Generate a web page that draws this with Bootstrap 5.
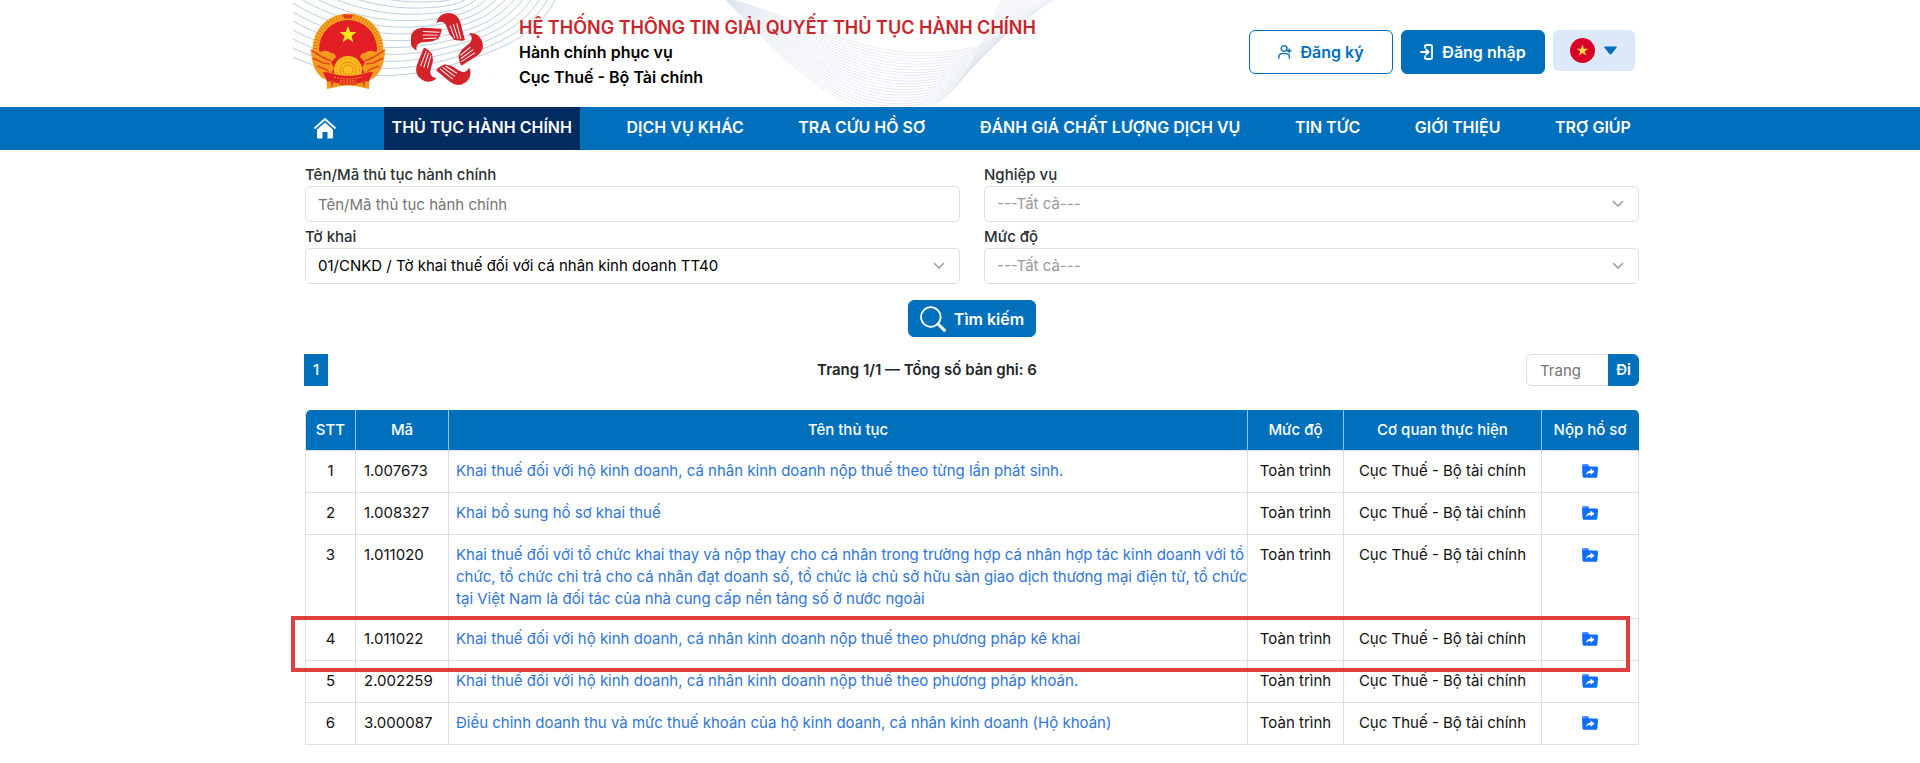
<!DOCTYPE html>
<html lang="vi">
<head>
<meta charset="utf-8">
<meta name="viewport" content="width=device-width, initial-scale=1">
<title>Hệ thống thông tin giải quyết thủ tục hành chính</title>
<link rel="stylesheet" href="https://cdn.jsdelivr.net/npm/bootstrap@5.3.0/dist/css/bootstrap.min.css">
<style>
  :root { --brand: #0070bc; --brand-dark: #002c60; --link: #2f76d8; --line: #dcdfe4; }
  body { font-family: Inter, "Open Sans", sans-serif; font-size: 15px; line-height: 22px; color: #212529; background: #fff; }
  .page-wrap { max-width: 1382px; padding: 0 12px 0 36px; }
  .site-header { min-height: 107px; padding: 10px 4px; }
  .header-art { left: 24px; top: 0; height: 106px; width: 830px; pointer-events: none; }
  .site-names { padding: 6px 0 0 10px; }
  .site-title { font-size: 18px; line-height: 24px; font-weight: 600; color: #c9252b; }
  .site-sub { font-size: 16px; line-height: 25px; font-weight: 600; color: #000; }
  .btn-brand, .btn-brand-outline { --bs-btn-color: #fff; --bs-btn-bg: var(--brand); --bs-btn-border-color: var(--brand); --bs-btn-hover-color: #fff; --bs-btn-hover-bg: #005f9f; --bs-btn-font-weight: 600; --bs-btn-font-size: 16px; --bs-btn-border-radius: 6px; }
  .btn-brand-outline { --bs-btn-color: var(--brand); --bs-btn-bg: #fff; }
  .btn-account { width: 144px; height: 44px; padding: 0; }
  .btn-lang { width: 82px; height: 41px; background: #dbe9f8; border-radius: 6px; padding: 0; }
  .btn-lang:hover { background: #cbdff4; }
  .main-nav { background: var(--brand); }
  .main-nav .nav-link { color: #fff; font-size: 16px; line-height: 24px; font-weight: 600; padding: 8px 8px 11px; text-transform: uppercase; }
  .main-nav .nav-link.active { background: var(--brand-dark); }
  .search-form { padding-top: 14px; }
  .field-label { font-weight: 500; line-height: 22px; display: block; color: #2b2f33; }
  .form-control, .form-select { height: 36px; font-size: 15px; line-height: 22px; padding: 6px 12px; border-color: var(--line); border-radius: 5px; color: #000; }
  .form-control::placeholder { color: #757575; }
  .form-select { background-size: 16px; background-image: url("data:image/svg+xml,%3csvg xmlns='http://www.w3.org/2000/svg' viewBox='0 0 16 16'%3e%3cpath fill='none' stroke='%23a0a0a0' stroke-width='1.6' d='m3 5 5 5 5-5'/%3e%3c/svg%3e"); }
  .form-select.unset { color: #9a9a9a; }
  .btn-search { height: 37px; padding: 0 11px; }
  .pager { padding-top: 17px; margin-bottom: 24px; }
  .page-chip { background: var(--brand); color: #fff; width: 24px; height: 32px; line-height: 32px; text-align: center; text-decoration: none; margin-left: -1px; }
  .page-jump { width: 113px; }
  .page-jump .form-control, .page-jump .btn { height: 32px; padding: 0 8px; font-size: 15px; }
  .page-jump .form-control { padding: 0 13px; }
  .page-jump .btn { padding: 0 7px; }
  .proc-table { table-layout: fixed; border-collapse: separate; border-spacing: 0; border-left: 1px solid var(--line); color: #111; margin: 0; }
  .proc-table th, .proc-table td { border: 0 solid var(--line); border-width: 0 1px 1px 0; padding: 9px 8px 8px; height: 42px; }
  .proc-table th { background: var(--brand); color: #fff; font-weight: 500; text-align: center; height: 41px; padding: 9px 4px; border-color: #cfe3f2 #9cc6e4; border-bottom-color: var(--line); }
  .proc-table th:first-child { border-top-left-radius: 5px; }
  .proc-table th:last-child { border-top-right-radius: 5px; border-right-color: var(--brand); }
  .proc-table .proc-name { padding-right: 0; padding-left: 7px; }
  .proc-table a { color: var(--link); text-decoration: none; }
  .proc-table .folder-link { display: block; line-height: 0; padding-top: 4px; color: #0d6efd; }
  .marked { position: relative; }
  .marker { position: absolute; left: -15px; right: 9px; top: -3px; bottom: -11px; border: 4px solid #e23d3d; pointer-events: none; z-index: 2; }
  .c-stt { width: 50px; } .c-ma { width: 93px; } .c-md { width: 96px; } .c-cq { width: 198px; } .c-nop { width: 97px; }
  @media (min-width: 1400px) { .long-line { display: block; white-space: nowrap; } }
</style>
</head>
<body>

<svg class="d-none" aria-hidden="true">
  <symbol id="folder" viewBox="0 0 16 14">
    <path fill="currentColor" opacity=".75" d="M0 3V1.600C0 .7.700 0 1.600 0h3.600c.5 0 .9.200 1.200.6L7.600 2z"/>
    <path fill="currentColor" d="M0 2.500 5.500 1.500 7 2.600h7.400c.9 0 1.600.7 1.600 1.600l-.6 8c-.1.900-.7 1.500-1.500 1.500H2c-.8 0-1.400-.6-1.500-1.500z"/>
    <path fill="#fff" d="m8.600 4.600 4 3.200-4 2.900V9c-2 0-3.300.5-4.600 1.900.3-2.700 1.900-4.300 4.600-4.500z"/>
  </symbol>
</svg>

<header>
  <div class="container-fluid page-wrap position-relative">
    <svg class="header-art position-absolute" viewBox="293 0 830 106" aria-hidden="true" fill="none">
      <g id="wavesLeft" stroke="#b4c8dd" stroke-width=".9"></g>
      <g id="wavesMid" stroke="#dfe7ef" stroke-width=".8"></g>
    </svg>
    <div class="site-header d-flex justify-content-between position-relative">
      <div class="d-flex">
        <svg width="78" height="82" viewBox="309 10 78 82" role="img" aria-label="Quốc huy Việt Nam">
          <circle cx="348" cy="49" r="35.500" fill="#f6a51c"/>
          <circle cx="348" cy="49" r="32.500" fill="none" stroke="#ea6a1c" stroke-width="5" stroke-dasharray=".8 2.200"/>
          <circle cx="348" cy="49" r="29" fill="#e31e25"/>
          <path d="M342.500 14.500h11l-2 4h-7z" fill="#e8381f"/>
          <path d="m348 26 2.200 6h6.300l-5 3.900 1.900 6.500-5.400-4-5.400 4 1.900-6.500-5-3.900h6.300z" fill="#fde31d"/>
          <path d="M311 52q5-3 10 0 5-3 10 1 4 0 5 4l-5 5 3 6-4 8 4 6-12-4q-10-8-11-26zM385 52q-5-3-10 0-5-3-10 1-4 0-5 4l5 5-3 6 4 8-4 6 12-4q10-8 11-26z" fill="#f59a1c"/>
          <path d="m311 50 11 7 9 4M313 58l10 5 7 1M317 66l8 3 5 4M385 50l-11 7-9 4M383 58l-10 5-7 1M379 66l-8 3-5 4" fill="none" stroke="#e8461d" stroke-width="1.600"/>
          <circle cx="348" cy="70" r="14" fill="#f9bd1b"/>
          <g fill="none" stroke="#f08a1c"><circle cx="348" cy="70" r="11.500" stroke-dasharray="2 1.500"/><circle cx="348" cy="70" r="8"/><circle cx="348" cy="70" r="5"/></g>
          <path d="M326 71q22 9 44 0l-1 18-9-2q-12-3-24 0l-9 2z" fill="#f39a1c"/>
          <path d="M323 72q6 0 10 2 15 4 30 0 4-2 10-2l-4 9q-21 6-42 0z" fill="#e31e25"/>
          <path d="m330 80 4 1-2 7zM366 80l-4 1 2 7zM339 82h18v3h-18z" fill="#e5481d"/>
          <path d="M334 77q14 4 28 0M340 81h16" fill="none" stroke="#f5a01c" stroke-dasharray="2 1"/>
        </svg>
        <svg class="ms-4" width="74" height="82" viewBox="-36 -42 77 85" role="img" aria-label="Biểu trưng hành chính phục vụ">
          <defs>
            <g id="hand">
              <path fill="#d2232a" d="M-9.300-28.500C-8.500-35-3.500-39 3-39c7 0 10.500 4 12.500 10l4.300 17c.3 1.400-.8 2-1.800 1.200-.4 1-1.700 1.100-2.400.1-.6.900-1.900.8-2.400-.2-.6.800-2 .6-2.300-.4-.9.700-2.100.4-2.500-.8L5-15.500C3.500-18 2.500-21 1-25c-1.500-4.500-6-6.500-10.300-3.500z"/>
              <path d="M4.500-26 9.500-13M8-27.500 12.800-12.500M11.500-28.500 16-12" stroke="#fff" stroke-width="1" fill="none"/>
            </g>
          </defs>
          <use href="#hand"/><use href="#hand" transform="rotate(72)"/><use href="#hand" transform="rotate(144)"/><use href="#hand" transform="rotate(216)"/><use href="#hand" transform="rotate(288)"/>
        </svg>
        <div class="site-names ms-4">
          <div class="site-title">HỆ THỐNG THÔNG TIN GIẢI QUYẾT THỦ TỤC HÀNH CHÍNH</div>
          <div class="site-sub">Hành chính phục vụ</div>
          <div class="site-sub">Cục Thuế - Bộ Tài chính</div>
        </div>
      </div>
      <div class="d-flex gap-2 pt-3 mt-1 align-items-start">
        <button type="button" class="btn btn-brand-outline btn-account d-flex align-items-center justify-content-center gap-2">
          <svg width="14" height="16" viewBox="0 0 16 18" fill="none" stroke="currentColor" stroke-width="1.600" stroke-linecap="round"><circle cx="7" cy="5" r="3.300"/><path d="M1 16v-1.500c0-2.500 2-3.700 4-3.700h4c2 0 4 1.200 4 3.700V16M12.800 5.500v4M10.800 7.500h4"/></svg>
          Đăng ký
        </button>
        <button type="button" class="btn btn-brand btn-account d-flex align-items-center justify-content-center gap-2">
          <svg width="14" height="18" viewBox="0 0 14 18" fill="none" stroke="currentColor" stroke-width="1.800" stroke-linecap="round"><path d="M5 4.500V3.300Q5 2 6.300 2h4.400Q12 2 12 3.300v11.400q0 1.300-1.300 1.300H6.300Q5 16 5 14.700v-1.200M1 9h7.500M6 6.300 8.700 9 6 11.700"/></svg>
          Đăng nhập
        </button>
        <button type="button" class="btn btn-lang d-flex align-items-center justify-content-center gap-2" aria-label="Ngôn ngữ: Tiếng Việt">
          <svg width="25" height="25" viewBox="0 0 25 25"><circle cx="12.500" cy="12.500" r="12.500" fill="#d80027"/><path fill="#ffda44" d="m12.500 6.500 1.400 4.200h4.400l-3.600 2.600 1.400 4.200-3.600-2.600-3.600 2.600 1.400-4.200-3.600-2.600h4.400z"/></svg>
          <svg width="15" height="9" viewBox="0 0 15 9"><path fill="#0070bc" d="M2 .500h11q1.300.2.500 1.300L8.500 8q-1 .9-2 0L1.500 1.800Q.7.700 2 .500z"/></svg>
        </button>
      </div>
    </div>
  </div>
</header>

<nav class="main-nav" aria-label="Điều hướng chính">
  <div class="container-fluid page-wrap">
    <div class="nav justify-content-between">
      <a class="nav-link" href="#" aria-label="Trang chủ">
        <svg class="d-block" width="24" height="24" viewBox="0 0 24 24"><path d="M2 13 12 4l10 9" fill="none" stroke="#fff" stroke-width="1.800" stroke-linecap="round" stroke-linejoin="round"/><path fill="#fff" d="m12 7.500 8 7V22q0 1.500-1.500 1.500h-4V17h-5v6.500h-4Q4 23.500 4 22v-7.500z"/></svg>
      </a>
      <a class="nav-link active" aria-current="page" href="#">Thủ tục hành chính</a>
      <a class="nav-link" href="#">Dịch vụ khác</a>
      <a class="nav-link" href="#">Tra cứu hồ sơ</a>
      <a class="nav-link" href="#">Đánh giá chất lượng dịch vụ</a>
      <a class="nav-link" href="#">Tin tức</a>
      <a class="nav-link" href="#">Giới thiệu</a>
      <a class="nav-link" href="#">Trợ giúp</a>
    </div>
  </div>
</nav>

<main class="container-fluid page-wrap">
  <form class="search-form" onsubmit="return false">
    <div class="row gx-4 gy-0">
      <div class="col-md-6 mb-1">
        <label class="field-label" for="ten">Tên/Mã thủ tục hành chính</label>
        <input class="form-control" id="ten" type="text" placeholder="Tên/Mã thủ tục hành chính">
      </div>
      <div class="col-md-6 mb-1">
        <label class="field-label" for="nghiepvu">Nghiệp vụ</label>
        <select class="form-select unset" id="nghiepvu"><option>---Tất cả---</option></select>
      </div>
      <div class="col-md-6">
        <label class="field-label" for="tokhai">Tờ khai</label>
        <select class="form-select" id="tokhai"><option>01/CNKD / Tờ khai thuế đối với cá nhân kinh doanh TT40</option></select>
      </div>
      <div class="col-md-6">
        <label class="field-label" for="mucdo">Mức độ</label>
        <select class="form-select unset" id="mucdo"><option>---Tất cả---</option></select>
      </div>
    </div>
    <div class="d-flex justify-content-center pt-3">
      <button type="submit" class="btn btn-brand btn-search d-flex align-items-center gap-2">
        <svg width="26" height="26" viewBox="0 0 26 26" fill="none" stroke="#fff"><circle cx="10.800" cy="11" r="9.800" stroke-width="1.700"/><path d="m18 18 6.500 6.300" stroke-width="3" stroke-linecap="round"/></svg>
        Tìm kiếm
      </button>
    </div>
  </form>

  <div class="pager d-flex justify-content-between align-items-center">
    <a class="page-chip d-block fw-medium" href="#" aria-label="Trang 1">1</a>
    <div class="fw-semibold">Trang 1/1 — Tổng số bản ghi: 6</div>
    <form class="input-group page-jump" onsubmit="return false">
      <input class="form-control" type="text" placeholder="Trang" aria-label="Trang">
      <button class="btn btn-brand" type="submit">Đi</button>
    </form>
  </div>

  <table class="table proc-table">
    <colgroup><col class="c-stt"><col class="c-ma"><col><col class="c-md"><col class="c-cq"><col class="c-nop"></colgroup>
    <thead>
      <tr><th scope="col">STT</th><th scope="col">Mã</th><th scope="col">Tên thủ tục</th><th scope="col">Mức độ</th><th scope="col">Cơ quan thực hiện</th><th scope="col">Nộp hồ sơ</th></tr>
    </thead>
    <tbody>
      <tr><td class="text-center">1</td><td>1.007673</td><td class="proc-name"><a href="#">Khai thuế đối với hộ kinh doanh, cá nhân kinh doanh nộp thuế theo từng lần phát sinh.</a></td><td class="text-center">Toàn trình</td><td class="text-center">Cục Thuế - Bộ tài chính</td><td class="text-center"><a class="folder-link" href="#" aria-label="Nộp hồ sơ 1"><svg width="16" height="14"><use href="#folder"/></svg></a></td></tr>
      <tr><td class="text-center">2</td><td>1.008327</td><td class="proc-name"><a href="#">Khai bổ sung hồ sơ khai thuế</a></td><td class="text-center">Toàn trình</td><td class="text-center">Cục Thuế - Bộ tài chính</td><td class="text-center"><a class="folder-link" href="#" aria-label="Nộp hồ sơ 2"><svg width="16" height="14"><use href="#folder"/></svg></a></td></tr>
      <tr><td class="text-center">3</td><td>1.011020</td><td class="proc-name"><a href="#"><span class="long-line">Khai thuế đối với tổ chức khai thay và nộp thay cho cá nhân trong trường hợp cá nhân hợp tác kinh doanh với tổ</span> <span class="long-line">chức, tổ chức chi trả cho cá nhân đạt doanh số, tổ chức là chủ sở hữu sàn giao dịch thương mại điện tử, tổ chức</span> tại Việt Nam là đối tác của nhà cung cấp nền tảng số ở nước ngoài</a></td><td class="text-center">Toàn trình</td><td class="text-center">Cục Thuế - Bộ tài chính</td><td class="text-center"><a class="folder-link" href="#" aria-label="Nộp hồ sơ 3"><svg width="16" height="14"><use href="#folder"/></svg></a></td></tr>
      <tr class="marked"><td class="text-center">4<span class="marker"></span></td><td>1.011022</td><td class="proc-name"><a href="#">Khai thuế đối với hộ kinh doanh, cá nhân kinh doanh nộp thuế theo phương pháp kê khai</a></td><td class="text-center">Toàn trình</td><td class="text-center">Cục Thuế - Bộ tài chính</td><td class="text-center"><a class="folder-link" href="#" aria-label="Nộp hồ sơ 4"><svg width="16" height="14"><use href="#folder"/></svg></a></td></tr>
      <tr><td class="text-center">5</td><td>2.002259</td><td class="proc-name"><a href="#">Khai thuế đối với hộ kinh doanh, cá nhân kinh doanh nộp thuế theo phương pháp khoán.</a></td><td class="text-center">Toàn trình</td><td class="text-center">Cục Thuế - Bộ tài chính</td><td class="text-center"><a class="folder-link" href="#" aria-label="Nộp hồ sơ 5"><svg width="16" height="14"><use href="#folder"/></svg></a></td></tr>
      <tr><td class="text-center">6</td><td>3.000087</td><td class="proc-name"><a href="#">Điều chỉnh doanh thu và mức thuế khoán của hộ kinh doanh, cá nhân kinh doanh (Hộ khoán)</a></td><td class="text-center">Toàn trình</td><td class="text-center">Cục Thuế - Bộ tài chính</td><td class="text-center"><a class="folder-link" href="#" aria-label="Nộp hồ sơ 6"><svg width="16" height="14"><use href="#folder"/></svg></a></td></tr>
    </tbody>
  </table>
</main>

<script src="https://cdn.jsdelivr.net/npm/bootstrap@5.3.0/dist/js/bootstrap.bundle.min.js"></script>
<script>
  // Blend two cubic curves into a family of header wave lines
  function waves(id, from, to, count) {
    const g = document.getElementById(id);
    for (let i = 0; i < count; i++) {
      const t = i / (count - 1);
      const p = from.map((v, k) => (v + (to[k] - v) * t).toFixed(1));
      const path = document.createElementNS('http://www.w3.org/2000/svg', 'path');
      path.setAttribute('d', `M${p[0]} ${p[1]}C${p.slice(2, 8).join(' ')}S${p.slice(8).join(' ')}`);
      g.appendChild(path);
    }
  }
  waves('wavesLeft', [293, -42, 330, -14, 375, 2, 420, 2, 455, -5, 480, -16], [293, 57, 325, 72, 380, 84, 440, 68, 540, 34, 557, -4], 12);
  waves('wavesMid', [724, -2, 780, 10, 850, 53, 922, 53, 1010, 28, 1056, -2], [724, -2, 780, 55, 830, 112, 892, 112, 965, 80, 1002, -2], 22);
</script>
</body>
</html>
